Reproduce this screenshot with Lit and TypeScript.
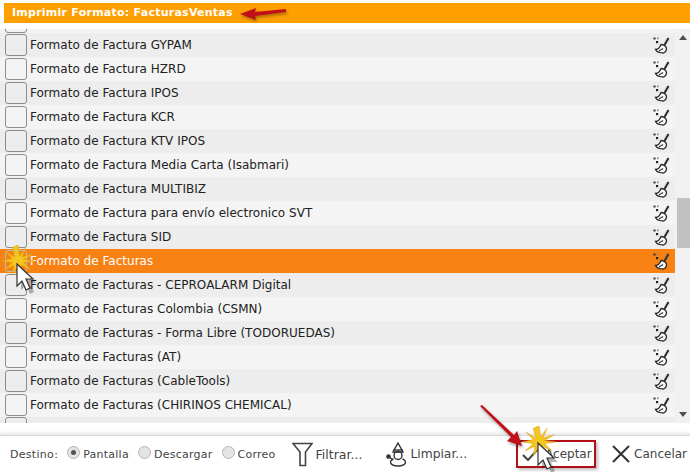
import { LitElement, html, css, svg } from "lit";
import { customElement } from "lit/decorators.js";

const rows = [
  "Formato de Factura GYPAM",
  "Formato de Factura HZRD",
  "Formato de Factura IPOS",
  "Formato de Factura KCR",
  "Formato de Factura KTV IPOS",
  "Formato de Factura Media Carta (Isabmari)",
  "Formato de Factura MULTIBIZ",
  "Formato de Factura para envío electronico SVT",
  "Formato de Factura SID",
  "Formato de Facturas",
  "Formato de Facturas - CEPROALARM Digital",
  "Formato de Facturas Colombia (CSMN)",
  "Formato de Facturas - Forma Libre (TODORUEDAS)",
  "Formato de Facturas (AT)",
  "Formato de Facturas (CableTools)",
  "Formato de Facturas (CHIRINOS CHEMICAL)",
];

const broom = html`<svg class="broom" viewBox="0 0 17 17" width="17" height="17" fill="none">
  <rect x="0.5" y="0.5" width="2" height="2" fill="#333"/><rect x="4" y="0.5" width="1.6" height="1.6" fill="#888"/><rect x="3" y="4" width="2.2" height="2.2" fill="#222"/>
  <path d="M15.5 1 L11.5 8" stroke="#333" stroke-width="2.2"/>
  <path d="M8 7.5 C10 7.5 12.5 9 13.5 11 C13.5 13.5 12 15.5 10.5 16 C7 16 3.5 14.5 2.5 12.5 C5 12.5 7 10.5 8 7.5 Z" fill="#fff" stroke="#2b2b2b" stroke-width="1.3"/>
  <path d="M6 14 L10 11.5" stroke="#333" stroke-width="1.1"/>
</svg>`;

const burst = (size: number) => svg`<svg width=${size} height=${size} viewBox="0 0 40 40">
  <path d="M20 0 L22 14 L30 3 L25 15 L39 11 L27 18 L40 20 L27 22 L36 31 L24 25 L26 38 L20 26 L13 37 L15 25 L3 31 L13 22 L0 20 L13 17 L4 8 L16 15 L13 3 Z" fill="#f5c61f" stroke="#e0a51a" stroke-width=".8"/>
</svg>`;

const cursor = svg`<svg width="24" height="32" viewBox="0 0 24 32">
  <path d="M5 5 L5 27 L10 22 L14 31 L18 29 L14 20 L21 20 Z" fill="#000" opacity=".28" transform="translate(2 1)"/>
  <path d="M3 2 L3 24 L8 19 L12 28 L16 26 L12 17 L19 17 Z" fill="#fff" stroke="#333" stroke-width="1.2"/>
</svg>`;

@customElement("app-root")
export class AppRoot extends LitElement {
  static styles = css`
    :host { display: block; width: 690px; height: 472px; position: relative; overflow: hidden; background: #fff; font-family: "DejaVu Sans", sans-serif; }
    .page { display: flex; flex-direction: column; height: 472px; padding-top: 3px; box-sizing: border-box; }
    .title { margin-left: 4px; height: 20px; background: #ffa000; color: #fff; font-size: 11px; font-weight: 700; letter-spacing: .25px; line-height: 20px; padding-left: 8px; flex: none; }
    .body { display: flex; margin-top: 6px; height: 394px; flex: none; overflow: hidden; }
    .list { width: 675px; flex: none; display: flex; flex-direction: column; }
    .row { height: 24px; flex: none; display: flex; align-items: center; font-size: 12px; color: #222; background: #f4f4f4; position: relative; }
    .row.even { background: #ededed; }
    .row.sel { background: #f78113; color: #fff; }
    .row.top { height: 4px; align-items: flex-end; overflow: hidden; }
    .row.bottom { height: 6px; align-items: flex-start; overflow: hidden; background: #ededed; }
    .box { width: 20px; height: 20px; margin-left: 5px; margin-right: 3px; flex: none; border: 1px solid #8c8c8c; border-radius: 3px; background: transparent; }
    .sel .box { border-color: #bbb; }
    .label { flex: 1; white-space: nowrap; letter-spacing: .02px; }
    .broom { margin-right: 5px; flex: none; }
    .scroll { width: 15px; background: #f1f1f1; display: flex; flex-direction: column; flex: none; }
    .arrow { width: 15px; height: 17px; display: flex; align-items: center; justify-content: center; flex: none; padding-left: 1px; box-sizing: border-box; }
    .up { border-left: 4px solid transparent; border-right: 4px solid transparent; border-bottom: 5px solid #505050; }
    .down { border-left: 4px solid transparent; border-right: 4px solid transparent; border-top: 5px solid #505050; }
    .track { flex: 1; width: 100%; padding-top: 152px; box-sizing: border-box; }
    .thumb { width: 13px; height: 50px; margin-left: 2px; background: #c1c1c1; }
    .foot { flex: 1; margin-top: 12px; border-top: 1px solid #d8d8d8; box-shadow: 0 -2px 3px rgba(0,0,0,.1); display: flex; align-items: center; font-size: 11px; color: #444; padding-left: 10px; }
    .dest { margin-right: 9px; letter-spacing: .3px; }
    .radio { display: flex; align-items: center; margin-right: 9px; gap: 3px; letter-spacing: .25px; }
    .dot { width: 11px; height: 11px; border-radius: 50%; border: 1px solid #b5b5b5; background: #e4e4e4; position: relative; top: -2px; display: flex; align-items: center; justify-content: center; }
    .dot.on::after { content: ""; width: 5px; height: 5px; border-radius: 50%; background: #555; }
    .btn { display: flex; align-items: center; font-size: 12.5px; color: #444; gap: 3px; flex: none; }
    .btn svg { flex: none; }
    .filter { margin-left: 7px; }
    .clean { margin-left: 24px; gap: 2px; font-size: 12.3px; }
    .ok { margin-left: 49px; width: 80px; height: 28px; box-sizing: border-box; border: 2px solid #b11116; padding-left: 4px; font-size: 12px; box-shadow: 2px 2px 3px rgba(0,0,0,.25); }
    .oktext { margin-left: 2px; }
    .cancel { margin-left: 16px; gap: 4px; font-size: 12px; }
    .fx { position: absolute; pointer-events: none; }
    .shadow { filter: drop-shadow(1px 2px 1.5px rgba(0,0,0,.35)); }
  `;

  render() {
    return html`
      <div class="page">
        <div class="title">Imprimir Formato: FacturasVentas</div>
        <div class="body">
          <div class="list">
            <div class="row top"><div class="box"></div></div>
            ${rows.map((r, i) => html`
              <div class="row ${i % 2 === 0 ? "even" : ""} ${i === 9 ? "sel" : ""}">
                <div class="box"></div><div class="label">${r}</div>${broom}
              </div>`)}
            <div class="row bottom"><div class="box"></div></div>
          </div>
          <div class="scroll">
            <div class="arrow"><div class="up"></div></div>
            <div class="track"><div class="thumb"></div></div>
            <div class="arrow"><div class="down"></div></div>
          </div>
        </div>
        <div class="foot">
          <span class="dest">Destino:</span>
          <label class="radio"><span class="dot on"></span>Pantalla</label>
          <label class="radio"><span class="dot"></span>Descargar</label>
          <label class="radio"><span class="dot"></span>Correo</label>
          <div class="btn filter">
            <svg width="21" height="25" viewBox="0 0 21 25" fill="none" stroke="#444" stroke-width="1.6"><path d="M1 1.5 H20 L13.5 10 V23.5 H8 V10 Z"/></svg>Filtrar...
          </div>
          <div class="btn clean">
            <svg width="22" height="25" viewBox="0 0 22 25" fill="none" stroke="#333" stroke-width="1.4"><path d="M7 10 L12 1 L17 10 Z"/><path d="M7 8 H17"/><circle cx="12" cy="13.5" r="4"/><path d="M7.5 17 C3 18.5 3 24 12 24 C21 24 21 18.5 16.5 17"/><path d="M2 14 L7 18"/><circle cx="2.5" cy="14.5" r="1.6" fill="#333"/></svg>Limpiar...
          </div>
          <div class="btn ok">
            <svg width="18" height="14" viewBox="0 0 18 14" fill="none" stroke="#444" stroke-width="2"><path d="M1 8 L6 13 L17 1"/></svg><span class="oktext">Aceptar</span>
          </div>
          <div class="btn cancel">
            <svg width="18" height="18" viewBox="0 0 18 18" fill="none" stroke="#333" stroke-width="2"><path d="M1 1 L17 17 M17 1 L1 17"/></svg>Cancelar
          </div>
        </div>
      </div>
      <svg class="fx shadow" style="left:240px;top:2px" width="50" height="20" viewBox="0 0 50 20"><path d="M46 7 L15 10 L16 6 L0 12 L16 18 L15 14 L46 10 Z" fill="#c1101a"/></svg>
      <svg class="fx shadow" style="left:478px;top:404px" width="50" height="44" viewBox="0 0 50 44"><path d="M2 2 L4 1 L36 31 L39 27 L44 42 L29 37 L33 33 Z" fill="#c1101a"/></svg>
      <div class="fx" style="left:2px;top:245px">${burst(32)}</div>
      <div class="fx" style="left:14px;top:262px">${cursor}</div>
      <div class="fx" style="left:523px;top:426px">${burst(32)}</div>
      <div class="fx" style="left:535px;top:441px">${cursor}</div>
    `;
  }
}
